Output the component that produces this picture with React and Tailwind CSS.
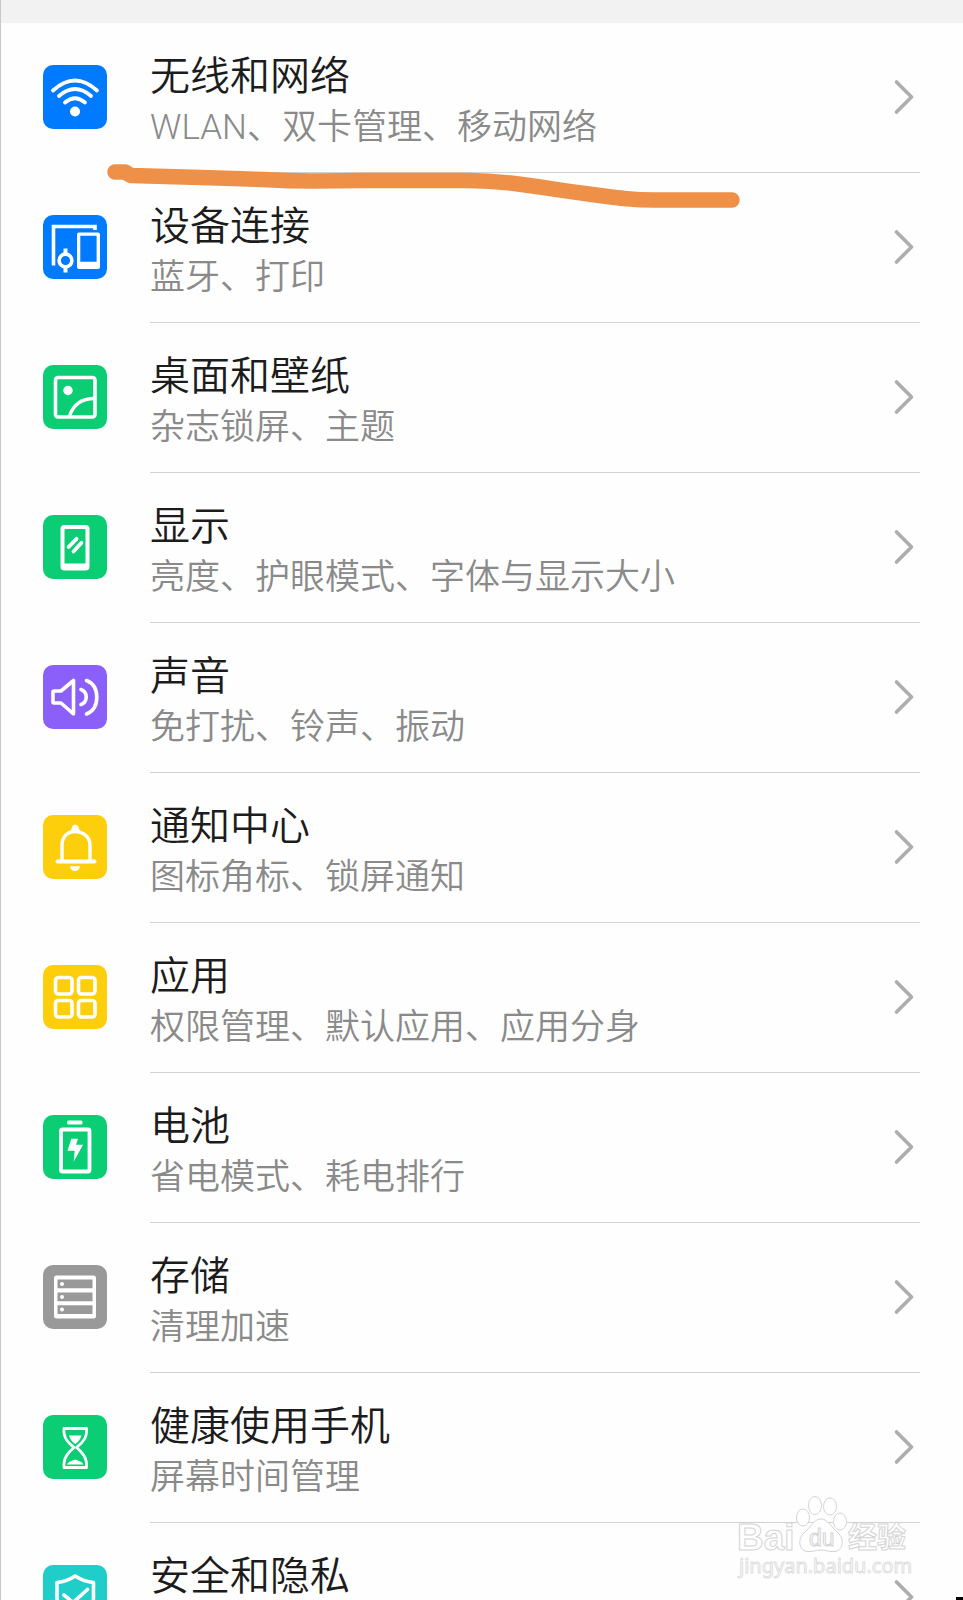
import React from 'react';

// Glyphs are drawn on the 64x64 coloured tile
function WifiGlyph() {
    return (
        <>
            <g strokeWidth="3.8" strokeLinecap="round">
                <path d="M10 25.5Q32 5.500 54 25.500" />
                <path d="M16 31Q32 17 48 31" />
                <path d="M22 37.500Q32 29 42 37.500" />
            </g>
            <circle cx="32" cy="46.500" r="5" fill="currentColor" stroke="none" />
        </>
    );
}

function DevicesGlyph() {
    return (
        <>
            <path d="M10.500 50.500V11.500H52V15" strokeWidth="3.600" />
            <path fillRule="evenodd" fill="currentColor" stroke="none" d="M36 17.500h19a2 2 0 0 1 2 2V52a2 2 0 0 1-2 2H36a2 2 0 0 1-2-2V19.500a2 2 0 0 1 2-2zM37.300 20.800V46.800H53.600V20.800z" />
            <circle cx="22.500" cy="45.500" r="6.400" strokeWidth="3.600" />
            <path d="M22.500 33.500V39M22.500 52v5.500" strokeWidth="4" />
        </>
    );
}

function WallpaperGlyph() {
    return (
        <>
            <rect x="12.500" y="12.500" width="39.500" height="39.500" rx="2.500" strokeWidth="3.600" />
            <circle cx="25" cy="25.500" r="4.700" fill="currentColor" stroke="none" />
            <path d="M26.500 51C30 40.500 38 33.500 51.500 33.500" strokeWidth="3.400" />
        </>
    );
}

function DisplayGlyph() {
    return (
        <>
            <path fillRule="evenodd" fill="currentColor" stroke="none" d="M21.500 10h21a4 4 0 0 1 4 4v37.500a4 4 0 0 1-4 4h-21a4 4 0 0 1-4-4V14a4 4 0 0 1 4-4zM22.500 14a1 1 0 0 0-1 1V48.500H42.500V15a1 1 0 0 0-1-1z" />
            <path d="M25.500 32L33.500 23.800M30.500 36.500L38.500 27.800" strokeWidth="3.800" strokeLinecap="round" />
        </>
    );
}

function SoundGlyph() {
    return (
        <g strokeWidth="3.600" strokeLinejoin="round" strokeLinecap="round">
            <path d="M11 26H18L30.500 15.500V49L18 38H11C10 38 10 38 10 37V27C10 26 10 26 11 26z" />
            <path d="M38 24.500A8 8 0 0 1 38 39.500" />
            <path d="M43.500 15.500C51 18.500 53.800 25 53.800 32.200S51 46 43.500 49" />
        </g>
    );
}

function BellGlyph() {
    return (
        <>
            <path d="M19 46V30.500C19 21 25 16.500 32 16.500S47 21 47 30.500V46" strokeWidth="3.400" />
            <path d="M14.500 46.500H51.500" strokeWidth="4" strokeLinecap="round" />
            <path d="M28 16.500C28.500 12.500 29.500 9.500 32 9.500S36 12.500 37 16.500zM27 51.200H37C36.500 54.500 34.500 56 32 56S27.500 54.500 27 51.200z" fill="currentColor" stroke="none" />
        </>
    );
}

function AppsGlyph() {
    return (
        <g strokeWidth="3.600">
            <rect x="12.500" y="12.500" width="16.500" height="16.500" rx="3" />
            <rect x="35.500" y="12.500" width="16.500" height="16.500" rx="3" />
            <rect x="12.500" y="35.500" width="16.500" height="16.500" rx="3" />
            <rect x="35.500" y="35.500" width="16.500" height="16.500" rx="3" />
        </g>
    );
}

function BatteryGlyph() {
    return (
        <>
            <rect x="18" y="14.500" width="28.500" height="42" rx="1.500" strokeWidth="3.800" />
            <rect x="24" y="5.500" width="15.500" height="4" rx="1.500" fill="currentColor" stroke="none" />
            <path d="M28.300 23.700H35L33 29.800H40L30.700 46.700L31.700 35.800H24.500z" fill="currentColor" stroke="none" />
        </>
    );
}

function StorageGlyph() {
    return (
        <g fill="currentColor" stroke="none">
            <path fillRule="evenodd" d="M13.500 10.500h37a2.500 2.500 0 0 1 2.500 2.500v38a2.500 2.500 0 0 1-2.500 2.500h-37A2.500 2.500 0 0 1 11 51V13a2.500 2.500 0 0 1 2.500-2.500zM14.500 14.500v8.800h35v-8.800zM14.500 27.500v8.800h35v-8.800zM14.500 40.200V49h35v-8.800z" />
            <circle cx="19" cy="19" r="2" />
            <circle cx="19" cy="32" r="2" />
            <circle cx="19" cy="44.600" r="2" />
        </g>
    );
}

function HourglassGlyph() {
    return (
        <>
            <path d="M21 13.500H43.500C44.500 24 38 28.500 33.500 32.500C38 36.500 44.500 42 43.500 52.500H21C20 42 26.500 36.500 31 32.500C26.500 28.500 20 24 21 13.500z" strokeWidth="2.800" strokeLinejoin="round" />
            <path d="M26 20.500H38.500C37.500 24.500 35 27 32.200 29C29.500 27 27 24.500 26 20.500zM24 49.500C25.500 46.500 28.500 46 32.200 44.500C36 46 39 46.500 40.500 49.500z" fill="currentColor" stroke="none" />
        </>
    );
}

function ShieldGlyph() {
    return (
        <g strokeWidth="3.600" strokeLinejoin="round">
            <path d="M32.200 11C27 14.500 20 17 14 17.500V32C14 43 22 50 32.200 54C42.500 50 50.500 43 50.500 32V17.500C44.500 17 37.500 14.500 32.200 11z" />
            <path d="M21 30L30 37.500L44.500 24.500" strokeLinecap="round" />
        </g>
    );
}

const settings = [
    { title: '无线和网络', detail: 'WLAN、双卡管理、移动网络', tile: 'bg-[#007bff]', Glyph: WifiGlyph },
    { title: '设备连接', detail: '蓝牙、打印', tile: 'bg-[#007bff]', Glyph: DevicesGlyph },
    { title: '桌面和壁纸', detail: '杂志锁屏、主题', tile: 'bg-[#0bcd74]', Glyph: WallpaperGlyph },
    { title: '显示', detail: '亮度、护眼模式、字体与显示大小', tile: 'bg-[#0bcd74]', Glyph: DisplayGlyph },
    { title: '声音', detail: '免打扰、铃声、振动', tile: 'bg-[#8a60f8]', Glyph: SoundGlyph },
    { title: '通知中心', detail: '图标角标、锁屏通知', tile: 'bg-[#fdce0c]', Glyph: BellGlyph },
    { title: '应用', detail: '权限管理、默认应用、应用分身', tile: 'bg-[#fdce0c]', Glyph: AppsGlyph },
    { title: '电池', detail: '省电模式、耗电排行', tile: 'bg-[#0bcd74]', Glyph: BatteryGlyph },
    { title: '存储', detail: '清理加速', tile: 'bg-[#999999]', Glyph: StorageGlyph },
    { title: '健康使用手机', detail: '屏幕时间管理', tile: 'bg-[#0bcd74]', Glyph: HourglassGlyph },
    { title: '安全和隐私', detail: '', tile: 'bg-[#1fcec9]', Glyph: ShieldGlyph },
];

function SettingRow({ item }) {
    const { title, detail, tile, Glyph } = item;

    return (
        <li>
            <a href="#" className="flex h-[150px] pl-[43px] pr-[43px]">
                <span className={`mt-[42px] h-16 w-16 shrink-0 overflow-hidden rounded-[10px] text-white ${tile}`}>
                    <svg viewBox="0 0 64 64" className="h-16 w-16" fill="none" stroke="currentColor" aria-hidden="true">
                        <Glyph />
                    </svg>
                </span>
                <span className="ml-[43px] flex min-w-0 flex-1 border-b border-[#d2d2d2]">
                    <span className="flex min-w-0 flex-1 flex-col whitespace-nowrap pt-[28px] font-[350]">
                        <span className="text-[40px] leading-[52px] text-[#1c1c1c]">{title}</span>
                        <span className="text-[35px] leading-[50px] text-[#8a8a8a]">{detail}</span>
                    </span>
                    <svg viewBox="0 0 24 40" className="mr-1 mt-[54px] h-10 w-6 shrink-0" fill="none" stroke="#adadad" strokeWidth="3.600" strokeLinecap="round" strokeLinejoin="round" aria-hidden="true">
                        <path d="M4.500 5L19.500 20L4.500 35" />
                    </svg>
                </span>
            </a>
        </li>
    );
}

// Hand-drawn marker line under the first row
function MarkerLine() {
    return (
        <svg viewBox="0 0 640 60" className="pointer-events-none absolute left-[102px] top-[155px] h-[60px] w-[640px]" fill="none" stroke="#ef9048" strokeWidth="15.500" strokeLinecap="round" strokeLinejoin="round" aria-hidden="true">
            <path d="M12 17H22L28 20.500L98 22.500L160 24.500Q185 26 210 26L260 25.500H365C410 26 440 33 482 38.500C515 43 530 45 552 45H629" />
        </svg>
    );
}

function Watermark() {
    return (
        <svg viewBox="0 0 180 90" className="pointer-events-none absolute bottom-[18px] right-[49px] h-[90px] w-[180px]" fill="#ffffff" stroke="#d4d4d4" strokeWidth="1" aria-label="Baidu 经验">
            <g fontFamily="'Liberation Sans', 'Noto Sans CJK SC', sans-serif">
                <text x="3" y="58" fontSize="37" fontWeight="700">Bai</text>
                <g>
                    <ellipse cx="69" cy="25.500" rx="6.500" ry="8.500" />
                    <ellipse cx="81" cy="13.500" rx="6.500" ry="9" />
                    <ellipse cx="96" cy="14.500" rx="6.500" ry="8.500" />
                    <ellipse cx="106" cy="29.500" rx="6.500" ry="8.500" />
                    <path d="M87 27C80 27 77 35 70 41C64 46 64 58 73 59.500C79 60 82 58 87 58S95 60 101 59.500C110 58 110 46 104 41C97 35 94 27 87 27z" />
                </g>
                <text x="75" y="54" fontSize="23">du</text>
                <text x="114" y="56" fontSize="29" fontWeight="700">经验</text>
                <text x="5" y="81" fontSize="20" stroke="#dedede" fontFamily="'Noto Sans', sans-serif">jingyan.baidu.com</text>
            </g>
        </svg>
    );
}

function App() {
    return (
        <main className="relative h-screen overflow-hidden border-l border-[#c8c8c8] bg-[#fefefe] font-['Roboto','Noto_Sans_CJK_SC',sans-serif]">
            <div className="h-[23px] bg-[#f2f2f2]" />
            <ul className="-ml-px">
                {settings.map((item) => (
                    <SettingRow key={item.title} item={item} />
                ))}
            </ul>
            <MarkerLine />
            <Watermark />
            <span className="absolute bottom-0 right-0 h-[3px] w-[7px] bg-black" />
        </main>
    );
}

export default App;
